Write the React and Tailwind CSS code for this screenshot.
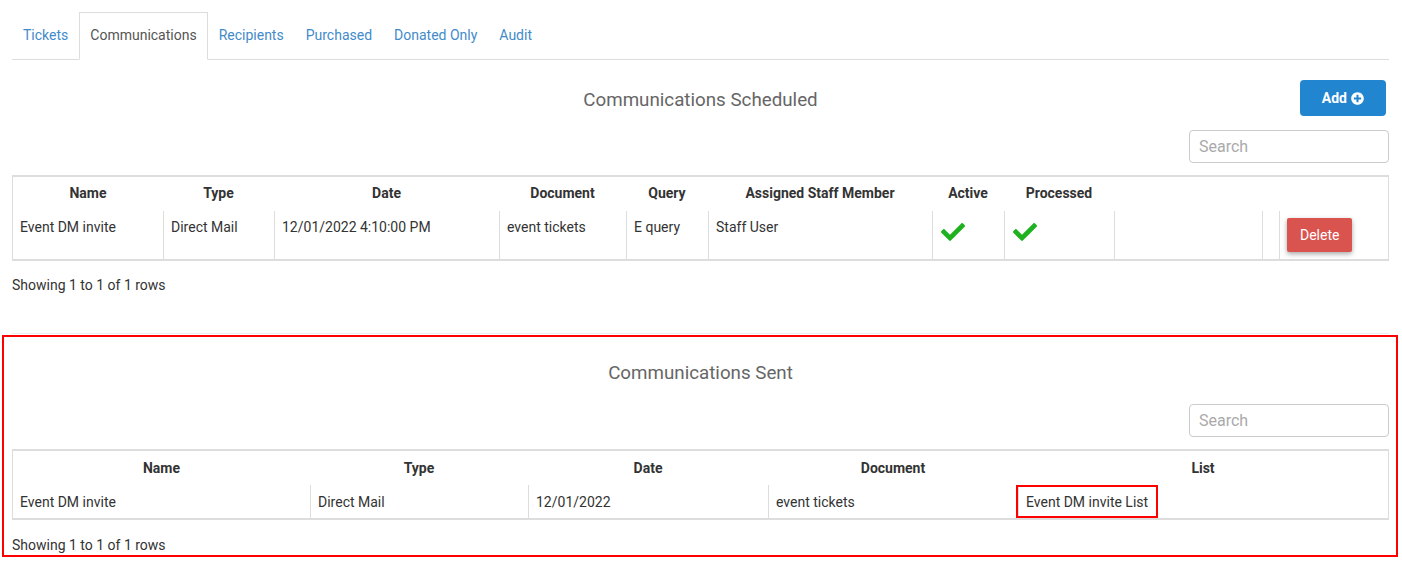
import React from "react";
import { FaCheck, FaPlusCircle } from "react-icons/fa";

const tabs = ["Tickets", "Communications", "Recipients", "Purchased", "Donated Only", "Audit"];

function Tabs() {
  return (
    <ul className="flex pt-[12px] border-b border-[#ddd]">
      {tabs.map((t) => {
        const active = t === "Communications";
        return (
          <li
            key={t}
            className={
              active
                ? "-mb-px h-[48px] px-[10px] pt-[12px] leading-[20px] border border-[#ddd] border-b-white bg-white text-[#555]"
                : "-mb-px h-[48px] px-[10px] pt-[12px] leading-[20px] border border-transparent text-[#428bca]"
            }
          >
            {t}
          </li>
        );
      })}
    </ul>
  );
}

function SearchBox() {
  return (
    <div className="flex justify-end">
      <input
        placeholder="Search"
        className="w-[200px] h-[33px] rounded-[4px] border border-[#ccc] px-[9px] text-[16px] text-[#555] placeholder:text-[#aaa] outline-none"
      />
    </div>
  );
}

function Check() {
  return <FaCheck size={24} className="mt-[3px] text-[#1fb21f]" />;
}

function ScheduledTable() {
  const widths = [150, 111, 225, 127, 82, 224, 72, 110, 148, 17, 109];
  const heads = ["Name", "Type", "Date", "Document", "Query", "Assigned Staff Member", "Active", "Processed", "", "", ""];
  const td = "align-top px-[7px] pt-[6px] pb-[7px] leading-[20px] border-l border-[#ddd]";
  return (
    <div className="border-x border-t-2 border-b-2 border-[#ddd]">
      <table className="w-full table-fixed border-separate border-spacing-0">
        <colgroup>
          {widths.map((w, i) => (
            <col key={i} style={{ width: w }} />
          ))}
        </colgroup>
        <thead>
          <tr>
            {heads.map((h, i) => (
              <th key={i} className="px-[7px] pt-[6px] pb-[8px] leading-[20px] font-bold text-center text-[#333]">
                {h}
              </th>
            ))}
          </tr>
        </thead>
        <tbody>
          <tr>
            <td className="align-top px-[7px] pt-[6px] pb-[7px] leading-[20px]">Event DM invite</td>
            <td className={td}>Direct Mail</td>
            <td className={td}>12/01/2022 4:10:00 PM</td>
            <td className={td}>event tickets</td>
            <td className={td}>E query</td>
            <td className={td}>Staff User</td>
            <td className={td + " pl-[8px]"}>
              <Check />
            </td>
            <td className={td + " pl-[8px]"}>
              <Check />
            </td>
            <td className={td}></td>
            <td className={td}></td>
            <td className={td}>
              <button className="mt-[1px] h-[34px] px-[13px] rounded-[2px] bg-[#d9534f] text-white leading-[20px] shadow-[0_2px_5px_rgba(0,0,0,0.35)]">
                Delete
              </button>
            </td>
          </tr>
        </tbody>
      </table>
    </div>
  );
}

function SentTable() {
  const widths = [297, 218, 240, 250, 370];
  const heads = ["Name", "Type", "Date", "Document", "List"];
  const td = "align-top px-[7px] pt-[7px] pb-[6px] leading-[20px] border-l border-[#ddd]";
  return (
    <div className="border-x border-t-2 border-b-2 border-[#ddd]">
      <table className="w-full table-fixed border-separate border-spacing-0">
        <colgroup>
          {widths.map((w, i) => (
            <col key={i} style={{ width: w }} />
          ))}
        </colgroup>
        <thead>
          <tr>
            {heads.map((h, i) => (
              <th key={i} className="px-[7px] py-[7px] leading-[20px] font-bold text-center text-[#333]">
                {h}
              </th>
            ))}
          </tr>
        </thead>
        <tbody>
          <tr>
            <td className="align-top px-[7px] pt-[7px] pb-[6px] leading-[20px]">Event DM invite</td>
            <td className={td}>Direct Mail</td>
            <td className={td}>12/01/2022</td>
            <td className={td}>event tickets</td>
            <td className="align-top p-0 leading-[20px] border-l border-[#ddd]">
              <span className="inline-block -ml-[3px] border-2 border-[#ff0000] px-[8px] pt-[5px] pb-[4px] leading-[20px]">
                Event DM invite List
              </span>
            </td>
          </tr>
        </tbody>
      </table>
    </div>
  );
}

export default function App() {
  return (
    <div className="w-[1402px] min-h-[571px] bg-white text-[14px] text-[#333] font-['Roboto',sans-serif]">
      <div className="pl-[12px] pr-[13px]">
        <Tabs />
        <div className="mt-[20px] grid grid-cols-[1fr_auto_1fr] items-center">
          <div />
          <h2 className="pt-[4px] text-[18.75px] leading-[26px] text-[#666] font-normal">Communications Scheduled</h2>
          <div className="flex justify-end">
            <button className="h-[36px] mr-[3px] pl-[22px] pr-[22px] rounded-[4px] bg-[#2185d0] text-white font-bold flex items-center gap-[4px]">
              Add <FaPlusCircle size={13} />
            </button>
          </div>
        </div>
        <div className="mt-[14px]">
          <SearchBox />
        </div>
        <div className="mt-[12px]">
          <ScheduledTable />
        </div>
        <p className="mt-[14px] leading-[20px]">Showing 1 to 1 of 1 rows</p>
        <div className="mt-[38px] h-px bg-[#eee]" />
      </div>
      <div className="mt-[1px] ml-[2px] mr-[4px] border-2 border-[#ff0000] pl-[8px] pr-[7px]">
        <h2 className="pt-[23px] text-center text-[18.75px] leading-[26px] text-[#666] font-normal">
          Communications Sent
        </h2>
        <div className="mt-[18px]">
          <SearchBox />
        </div>
        <div className="mt-[12px]">
          <SentTable />
        </div>
        <p className="mt-[15px] leading-[20px]">Showing 1 to 1 of 1 rows</p>
      </div>
    </div>
  );
}
